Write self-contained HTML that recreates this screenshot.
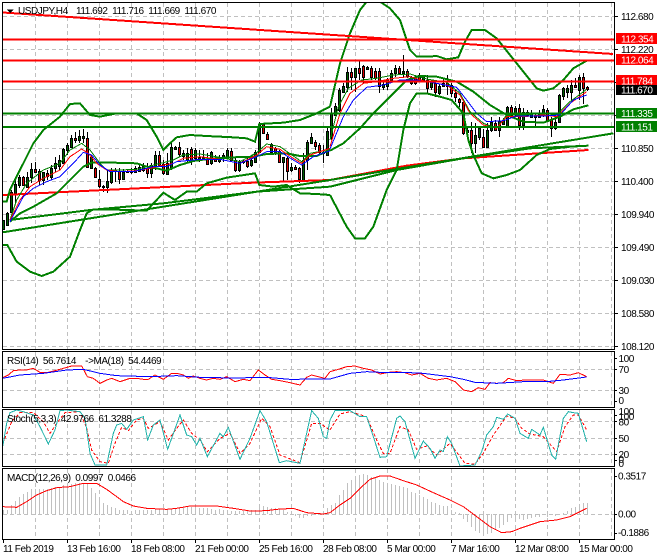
<!DOCTYPE html>
<html><head><meta charset="utf-8"><style>
html,body{margin:0;padding:0;background:#fff}
svg{display:block;font-family:"Liberation Sans",sans-serif;font-size:10px;letter-spacing:-.45px}
text{fill:#000}
text.h{word-spacing:2.3px}
.w{fill:#fff}
.g{stroke:#c0c0c0;stroke-width:1;stroke-dasharray:4 3;fill:none}
.f{fill:none;stroke:#000;stroke-width:1}
.bb{fill:none;stroke:#008000;stroke-width:6}
.ln{fill:none;stroke-width:2}
</style></head><body>
<svg width="660" height="560" viewBox="0 0 660 560" shape-rendering="crispEdges" xmlns="http://www.w3.org/2000/svg">
<defs>
<clipPath id="cm"><rect x="3" y="3" width="611" height="346"/></clipPath>
<clipPath id="cs"><rect x="3" y="410" width="611" height="56"/></clipPath>
</defs>
<rect width="660" height="560" fill="#fff"/>
<!-- grids -->
<path class="g" d="M3 16.5H614M3 49.5H614M3 115.5H614M3 148.5H614M3 181.5H614M3 214.5H614M3 247.5H614M3 280.5H614M3 313.5H614M3 346.5H614
M3 369.5H614M3 390.5H614M3 421.5H614M3 438.5H614M3 454.5H614M3 514.5H614"/>
<path class="g" d="M35.5 3V349M67.5 3V349M99.5 3V349M131.5 3V349M163.5 3V349M195.5 3V349M227.5 3V349M259.5 3V349M291.5 3V349M323.5 3V349M355.5 3V349M387.5 3V349M419.5 3V349M451.5 3V349M483.5 3V349M515.5 3V349M547.5 3V349M579.5 3V349M611.5 3V349
M35.5 352V407M67.5 352V407M99.5 352V407M131.5 352V407M163.5 352V407M195.5 352V407M227.5 352V407M259.5 352V407M291.5 352V407M323.5 352V407M355.5 352V407M387.5 352V407M419.5 352V407M451.5 352V407M483.5 352V407M515.5 352V407M547.5 352V407M579.5 352V407M611.5 352V407
M35.5 410V466M67.5 410V466M99.5 410V466M131.5 410V466M163.5 410V466M195.5 410V466M227.5 410V466M259.5 410V466M291.5 410V466M323.5 410V466M355.5 410V466M387.5 410V466M419.5 410V466M451.5 410V466M483.5 410V466M515.5 410V466M547.5 410V466M579.5 410V466M611.5 410V466
M35.5 469V539M67.5 469V539M99.5 469V539M131.5 469V539M163.5 469V539M195.5 469V539M227.5 469V539M259.5 469V539M291.5 469V539M323.5 469V539M355.5 469V539M387.5 469V539M419.5 469V539M451.5 469V539M483.5 469V539M515.5 469V539M547.5 469V539M579.5 469V539M611.5 469V539"/>
<path d="M3 89.5H614" stroke="#c0c0c0" fill="none"/>

<g clip-path="url(#cm)">
<!-- wicks -->
<path fill="none" stroke="#000" d="M3.5 220V230M7.5 212V226M11.5 190V213M15.5 180V204M19.5 175V188M23.5 176V185M27.5 172V188M31.5 163V183M35.5 162V173M39.5 169V185M43.5 172V185M47.5 170V180M51.5 165V180M55.5 157V172M59.5 155V170M63.5 148V164M67.5 143V155M71.5 135V148M75.5 132V143M79.5 130V143M83.5 129V143M87.5 132V168M91.5 155V169M95.5 167V178M99.5 170V188M103.5 185V192M107.5 170V193M111.5 168V184M115.5 168V182M119.5 168V184M123.5 169V180M127.5 170V173M131.5 168V174M135.5 166V173M139.5 165V172M143.5 163V172M147.5 163V178M151.5 163V178M155.5 151V170M159.5 151V167M163.5 160V175M167.5 153V175M171.5 142V170M175.5 146V150M179.5 142V157M183.5 150V160M187.5 148V162M191.5 147V165M195.5 148V160M199.5 150V162M203.5 150V160M207.5 153V165M211.5 151V165M215.5 155V162M219.5 155V163M223.5 153V162M227.5 148V159M231.5 148V162M235.5 158V172M239.5 160V172M243.5 160V164M247.5 158V168M251.5 158V167M255.5 150V163M259.5 122V153M263.5 123V134M267.5 132V140M271.5 143V153M275.5 147V155M279.5 150V163M283.5 157V182M287.5 157V180M291.5 163V172M295.5 165V170M299.5 167V183M303.5 153V182M307.5 140V170M311.5 133V144M315.5 140V150M319.5 143V155M323.5 145V163M327.5 128V156M331.5 108V140M335.5 103V116M339.5 88V112M343.5 83V93M347.5 67V92M351.5 68V90M355.5 68V92M359.5 60V80M363.5 65V83M367.5 66V70M371.5 66V80M375.5 68V80M379.5 68V93M383.5 82V90M387.5 78V90M391.5 70V83M395.5 65V77M399.5 66V74M403.5 55V77M407.5 69V78M411.5 76V85M415.5 75V85M419.5 73V82M423.5 75V80M427.5 75V93M431.5 80V90M435.5 82V97M439.5 84V95M443.5 78V87M447.5 75V95M451.5 83V97M455.5 89V102M459.5 98V107M463.5 102V135M467.5 128V136M471.5 122V153M475.5 123V153M479.5 126V140M483.5 129V148M487.5 123V148M491.5 117V132M495.5 120V131M499.5 117V137M503.5 118V125M507.5 106V128M511.5 105V117M515.5 106V117M519.5 104V130M523.5 108V130M527.5 110V116M531.5 110V118M535.5 113V128M539.5 110V118M543.5 105V117M547.5 108V122M551.5 117V137M555.5 117V130M559.5 94V123M563.5 87V100M567.5 85V98M571.5 80V100M575.5 78V88M579.5 75V100M583.5 73V104M587.5 86V91"/>
<!-- bull bodies -->
<path fill="#006000" stroke="#000" d="M2.5 220.5h2v9h-2zM6.5 213.5h2v12h-2zM10.5 192.5h2v20h-2zM14.5 184.5h2v9h-2zM18.5 177.5h2v8h-2zM26.5 177.5h2v10h-2zM30.5 169.5h2v8h-2zM42.5 172.5h2v8h-2zM50.5 168.5h2v9h-2zM54.5 163.5h2v5h-2zM58.5 160.5h2v6h-2zM62.5 149.5h2v14h-2zM66.5 145.5h2v5h-2zM70.5 138.5h2v9h-2zM78.5 136.5h2v4h-2zM82.5 136.5h2v2h-2zM90.5 157.5h2v11h-2zM102.5 186.5h2v1h-2zM106.5 181.5h2v6h-2zM110.5 170.5h2v12h-2zM114.5 170.5h2v1h-2zM122.5 172.5h2v7h-2zM126.5 171.5h2v1h-2zM130.5 171.5h2v1h-2zM134.5 168.5h2v4h-2zM138.5 167.5h2v4h-2zM142.5 166.5h2v4h-2zM150.5 165.5h2v8h-2zM154.5 155.5h2v11h-2zM166.5 163.5h2v11h-2zM170.5 147.5h2v21h-2zM174.5 147.5h2v2h-2zM182.5 153.5h2v3h-2zM186.5 153.5h2v7h-2zM194.5 150.5h2v8h-2zM198.5 157.5h2v2h-2zM202.5 157.5h2v1h-2zM210.5 152.5h2v11h-2zM218.5 158.5h2v3h-2zM222.5 155.5h2v2h-2zM226.5 150.5h2v7h-2zM238.5 162.5h2v8h-2zM242.5 161.5h2v1h-2zM250.5 160.5h2v5h-2zM254.5 152.5h2v10h-2zM258.5 124.5h2v28h-2zM270.5 144.5h2v8h-2zM282.5 157.5h2v5h-2zM290.5 167.5h2v3h-2zM302.5 160.5h2v20h-2zM306.5 142.5h2v18h-2zM310.5 137.5h2v6h-2zM322.5 152.5h2v1h-2zM326.5 131.5h2v24h-2zM330.5 113.5h2v24h-2zM334.5 106.5h2v9h-2zM338.5 90.5h2v20h-2zM342.5 86.5h2v6h-2zM346.5 72.5h2v15h-2zM354.5 68.5h2v9h-2zM366.5 67.5h2v2h-2zM382.5 84.5h2v3h-2zM386.5 79.5h2v7h-2zM390.5 73.5h2v7h-2zM394.5 68.5h2v5h-2zM402.5 71.5h2v2h-2zM410.5 77.5h2v6h-2zM422.5 75.5h2v5h-2zM430.5 82.5h2v5h-2zM438.5 86.5h2v7h-2zM442.5 83.5h2v3h-2zM466.5 130.5h2v2h-2zM474.5 135.5h2v8h-2zM478.5 128.5h2v9h-2zM486.5 130.5h2v17h-2zM490.5 122.5h2v8h-2zM498.5 121.5h2v9h-2zM502.5 120.5h2v4h-2zM506.5 107.5h2v20h-2zM514.5 108.5h2v5h-2zM522.5 112.5h2v13h-2zM526.5 112.5h2v3h-2zM530.5 113.5h2v4h-2zM534.5 115.5h2v2h-2zM538.5 113.5h2v4h-2zM542.5 109.5h2v6h-2zM554.5 122.5h2v6h-2zM558.5 95.5h2v27h-2zM562.5 88.5h2v8h-2zM566.5 88.5h2v4h-2zM570.5 85.5h2v7h-2zM578.5 77.5h2v13h-2z"/>
<!-- bear bodies -->
<path fill="#e00000" stroke="#000" d="M22.5 177.5h2v8h-2zM34.5 169.5h2v3h-2zM38.5 171.5h2v9h-2zM46.5 173.5h2v3h-2zM74.5 138.5h2v2h-2zM86.5 138.5h2v29h-2zM94.5 168.5h2v9h-2zM98.5 179.5h2v7h-2zM118.5 171.5h2v8h-2zM146.5 168.5h2v5h-2zM158.5 155.5h2v10h-2zM162.5 164.5h2v9h-2zM178.5 147.5h2v7h-2zM190.5 149.5h2v11h-2zM206.5 159.5h2v5h-2zM214.5 159.5h2v2h-2zM230.5 151.5h2v9h-2zM234.5 160.5h2v10h-2zM246.5 161.5h2v5h-2zM262.5 124.5h2v9h-2zM266.5 134.5h2v5h-2zM274.5 148.5h2v4h-2zM278.5 151.5h2v11h-2zM286.5 158.5h2v13h-2zM294.5 167.5h2v2h-2zM298.5 168.5h2v11h-2zM314.5 142.5h2v4h-2zM318.5 145.5h2v7h-2zM350.5 72.5h2v5h-2zM358.5 68.5h2v5h-2zM362.5 66.5h2v11h-2zM370.5 68.5h2v9h-2zM374.5 71.5h2v7h-2zM378.5 71.5h2v15h-2zM398.5 68.5h2v5h-2zM406.5 71.5h2v5h-2zM414.5 77.5h2v6h-2zM418.5 75.5h2v5h-2zM426.5 80.5h2v8h-2zM434.5 83.5h2v9h-2zM446.5 83.5h2v3h-2zM450.5 85.5h2v8h-2zM454.5 93.5h2v4h-2zM458.5 99.5h2v3h-2zM462.5 102.5h2v31h-2zM470.5 130.5h2v13h-2zM482.5 137.5h2v10h-2zM494.5 123.5h2v7h-2zM510.5 107.5h2v8h-2zM518.5 108.5h2v17h-2zM546.5 110.5h2v10h-2zM550.5 119.5h2v9h-2zM574.5 85.5h2v2h-2zM582.5 77.5h2v11h-2zM586.5 87.5h2v2h-2z"/>

<!-- left half curves (3x coords) -->
<g transform="scale(.33333)">
<polyline class="bb" points="8,585 760,548 990,540" style="stroke:#f00"/>
<polyline class="bb" points="8,605 20,605 30,570 50,530 70,490 100,430 130,390 180,350 210,312 240,310 270,345 300,350 350,340 410,340 440,360 470,410 490,450 510,430 530,412 570,405 620,408 700,412 740,415 765,425 778,372 850,368 900,360 950,340 990,320"/>
<polyline class="bb" points="8,735 22,735 50,785 90,815 125,828 160,815 210,770 240,690 260,640 280,628 320,628 440,632 470,600 490,578 525,600 560,575 590,575 620,550 680,533 765,520 778,555 820,560 860,555 900,580 950,582 990,585"/>
<polyline class="bb" points="30,665 60,640 100,620 170,580 210,540 250,500 275,488 340,488 410,490 440,500 470,505 500,512 540,495 580,483 640,475 700,472 760,470 800,462 860,460 900,468 950,468 990,450"/>
<polyline class="bb" points="30,660 270,630 490,610 770,575 990,560"/>
<polyline class="bb" points="8,697 990,540"/>
<g fill="none" stroke-width="3">
<polyline stroke="#008000" points="30,660 50,600 80,550 130,510 180,490 210,450 245,430 270,450 300,490 320,510 360,510 410,508 450,498 490,488 520,480 550,465 600,462 660,472 720,485 770,458 800,432 840,440 880,468 905,485 930,460 990,448"/>
<polyline stroke="#f00" points="30,660 60,600 90,560 130,535 180,510 210,470 245,447 265,460 290,490 320,510 360,515 410,512 450,505 490,495 520,490 550,475 600,470 660,478 720,490 770,465 800,440 840,448 880,475 905,490 930,465 990,445"/>
<polyline stroke="#00f" points="30,665 70,590 100,565 140,545 180,530 220,490 250,457 275,465 300,495 330,515 400,515 460,500 500,500 530,485 600,478 660,478 720,490 770,470 800,455 840,455 880,480 905,495 940,470 990,452"/>
</g>
</g>
<!-- right half curves -->
<g transform="translate(330 0) scale(.33333)">
<polyline class="bb" points="0,540 230,497 400,475 775,450" style="stroke:#f00"/>
<polyline class="bb" points="0,320 30,190 60,100 90,30 110,5 150,5 180,25 210,60 240,150 260,170 290,170 320,168 350,178 385,172 405,125 425,90 465,90 500,115 540,165 580,215 620,265 640,272 670,265 700,240 730,205 770,182"/>
<polyline class="bb" points="0,585 50,680 75,715 105,715 130,680 170,570 200,510 220,390 240,310 260,280 290,280 330,290 365,300 400,340 415,420 430,465 455,520 490,535 530,525 570,510 620,465 660,447 720,440 775,437"/>
<polyline class="bb" points="0,452 40,430 90,385 130,340 180,290 230,240 270,228 320,230 380,245 430,275 480,315 530,345 580,365 640,368 690,350 730,328 775,316"/>
<polyline class="bb" points="0,560 200,510 400,475 600,445 775,437"/>
<polyline class="bb" points="0,540 850,400"/>
<g fill="none" stroke-width="3">
<polyline stroke="#008000" points="0,420 25,320 55,265 95,240 140,235 190,225 240,222 290,237 350,247 390,280 420,335 460,370 500,385 530,345 580,345 640,340 680,345 720,305 770,268"/>
<polyline stroke="#f00" points="0,440 30,340 60,280 100,250 140,245 190,235 240,230 290,245 350,255 390,285 420,340 460,375 500,385 530,350 580,350 640,345 680,350 720,310 770,275"/>
<polyline stroke="#00f" points="0,447 40,350 70,300 110,262 160,255 210,240 260,240 320,250 380,262 410,300 440,340 470,365 520,362 560,348 640,348 690,345 730,300 770,285"/>
</g>
</g>
<!-- straight objects -->
<path class="ln" stroke="#f00" d="M3 12.5L613 54M3 39.5H614M3 60.5H614M3 81.5H614"/>
<path class="ln" stroke="#008000" d="M3 113.5H614M3 127H614"/>
</g>

<!-- macd bars -->
<path fill="none" stroke="#c0c0c0" d="M3.5 514V510M7.5 514V510M11.5 514V505M15.5 514V501M19.5 514V497M23.5 514V494M27.5 514V492M31.5 514V489M35.5 514V489M39.5 514V489M43.5 514V489M47.5 514V489M51.5 514V488M55.5 514V487M59.5 514V487M63.5 514V485M67.5 514V485M71.5 514V484M75.5 514V483M79.5 514V483M83.5 514V483M87.5 514V484M91.5 514V488M95.5 514V493M99.5 514V497M103.5 514V503M107.5 514V505M111.5 514V507M115.5 514V508M119.5 514V510M123.5 514V510M127.5 514V510M131.5 514V511M135.5 514V510M139.5 514V510M143.5 514V510M147.5 514V510M151.5 514V510M155.5 514V509M159.5 514V509M163.5 514V509M167.5 514V509M171.5 514V509M175.5 514V509M179.5 514V507M183.5 514V507M187.5 514V507M191.5 514V507M195.5 514V508M199.5 514V508M203.5 514V508M207.5 514V508M211.5 514V509M215.5 514V510M219.5 514V509M223.5 514V510M227.5 514V510M231.5 514V511M235.5 514V511M239.5 514V511M243.5 514V511M247.5 514V511M251.5 514V510M255.5 514V510M259.5 514V507M263.5 514V506M267.5 514V507M271.5 514V508M275.5 514V508M279.5 514V509M283.5 514V510M287.5 514V512M291.5 514V512M295.5 514V516M299.5 514V518M303.5 514V518M307.5 514V516M311.5 514V516M315.5 514V515M319.5 514V514M323.5 514V512M327.5 514V508M331.5 514V505M335.5 514V503M339.5 514V495M343.5 514V490M347.5 514V483M351.5 514V480M355.5 514V476M359.5 514V475M363.5 514V474M367.5 514V475M371.5 514V477M375.5 514V477M379.5 514V480M383.5 514V482M387.5 514V483M391.5 514V484M395.5 514V485M399.5 514V486M403.5 514V487M407.5 514V488M411.5 514V492M415.5 514V493M419.5 514V495M423.5 514V497M427.5 514V499M431.5 514V502M435.5 514V503M439.5 514V505M443.5 514V506M447.5 514V506M451.5 514V510M455.5 514V512M459.5 514V513M463.5 514V519M467.5 514V522M471.5 514V527M475.5 514V531M479.5 514V533M483.5 514V535M487.5 514V534M491.5 514V533M495.5 514V530M499.5 514V528M503.5 514V525M507.5 514V522M511.5 514V518M515.5 514V520M519.5 514V519M523.5 514V520M527.5 514V519M531.5 514V518M535.5 514V517M539.5 514V517M543.5 514V515M547.5 514V517M551.5 514V515M555.5 514V516M559.5 514V514M563.5 514V513M567.5 514V511M571.5 514V508M575.5 514V507M579.5 514V505M583.5 514V503M587.5 514V503"/>

<!-- RSI -->
<g transform="translate(0 340) scale(.33333)" fill="none" stroke-width="3">
<polyline stroke="#f00" points="8,113 25,105 40,92 60,90 80,90 100,85 120,97 145,97 165,92 190,85 215,78 245,78 262,110 280,115 300,130 320,120 335,115 360,125 390,115 410,115 430,118 445,118 465,105 490,118 515,100 530,100 550,105 565,115 580,108 600,115 620,120 640,115 660,118 680,110 705,125 730,118 750,122 775,90 795,105 815,118 840,122 870,128 900,135 920,112 935,105 955,110 975,115 990,95"/>
<polyline stroke="#00f" stroke-width="3" points="8,115 60,105 130,100 200,90 250,88 300,100 350,107 450,110 530,107 600,112 700,114 800,112 870,118 990,117"/>
<g transform="translate(990 0)">
<polyline stroke="#f00" points="0,95 25,88 50,80 75,78 100,85 125,90 150,102 175,97 200,95 225,98 245,105 270,100 295,115 320,120 350,115 375,125 400,150 425,155 445,143 465,148 480,128 500,130 520,128 535,115 560,122 585,120 640,120 670,130 690,103 720,105 745,98 770,110"/>
<polyline stroke="#00f" stroke-width="3" points="0,117 60,100 110,95 170,98 220,97 280,100 360,110 400,118 435,127 500,130 580,125 660,124 700,120 770,111"/>
</g>
</g>

<!-- Stoch -->
<g clip-path="url(#cs)">
<g transform="translate(0 340) scale(.33333)" fill="none" stroke-width="3">
<polyline stroke="#f00" stroke-dasharray="9 6" points="8,310 25,270 35,245 60,218 100,218 130,245 150,280 170,250 195,218 240,215 260,265 275,330 300,365 325,370 345,310 365,262 385,272 410,240 430,235 445,265 480,245 505,300 530,265 550,240 575,280 600,300 622,335 660,295 690,280 720,340 750,310 785,235 810,260 840,345 900,368 935,250 960,250 990,270"/>
<polyline stroke="#20b2aa" points="8,320 20,250 30,218 50,210 70,215 100,225 120,260 145,312 165,270 180,212 200,210 240,215 255,235 270,340 285,375 320,375 340,280 350,255 365,250 380,268 400,240 430,230 443,300 460,255 480,240 503,328 540,225 560,285 575,290 590,315 600,295 622,350 660,280 670,290 685,262 720,358 750,295 780,212 800,245 838,368 860,362 900,370 935,212 955,235 970,290 980,295 990,240"/>
<g transform="translate(990 0)">
<polyline stroke="#f00" stroke-dasharray="9 6" points="0,270 30,222 60,215 110,230 140,300 160,340 180,340 210,260 235,270 260,328 290,318 320,345 360,310 405,370 435,372 460,340 490,285 530,228 555,235 575,265 600,282 640,290 680,335 705,260 730,225 745,225 770,270"/>
<polyline stroke="#20b2aa" points="0,240 15,212 60,212 90,230 110,230 130,290 150,352 170,350 200,235 210,228 225,245 255,355 280,303 300,325 315,355 330,330 340,335 352,290 365,310 390,378 435,375 455,335 470,285 490,260 500,232 520,238 533,222 555,235 570,280 595,295 605,268 630,285 640,262 665,345 677,358 700,235 715,215 730,218 745,220 770,305"/>
</g>
</g>
</g>

<!-- MACD line -->
<g transform="translate(0 340) scale(.33333)" fill="none" stroke="#f00" stroke-width="3">
<polyline points="8,500 50,502 80,485 110,465 140,452 170,443 210,440 250,430 290,430 320,448 350,470 370,485 400,498 440,505 500,508 530,505 570,498 650,498 700,505 750,513 800,512 830,508 880,505 920,518 970,522 990,518"/>
<polyline transform="translate(990 0)" points="0,518 30,495 60,475 90,445 120,418 150,408 180,408 220,422 260,435 310,458 360,480 400,500 440,530 480,560 515,578 545,575 570,565 630,545 680,540 720,530 770,505"/>
</g>

<!-- frames -->
<path class="f" d="M2.5 2.5H614.5V349.5H2.5ZM2.5 351.5H614.5V407.5H2.5ZM2.5 409.5H614.5V466.5H2.5ZM2.5 468.5H614.5V539.5H2.5Z"/>
<!-- ticks -->
<path class="f" d="M614 16.5h4M614 49.5h4M614 82.5h4M614 115.5h4M614 148.5h4M614 181.5h4M614 214.5h4M614 247.5h4M614 280.5h4M614 313.5h4M614 346.5h4M614 358.5h3M614 369.5h3M614 390.5h3M614 401.5h3M614 415.5h3M614 421.5h3M614 438.5h3M614 454.5h3M614 460.5h3M614 476.5h3M614 514.5h3M614 533.5h3M3.5 539v4M67.5 539v4M131.5 539v4M195.5 539v4M259.5 539v4M323.5 539v4M387.5 539v4M451.5 539v4M515.5 539v4M579.5 539v4"/>

<!-- title -->
<path d="M7 9.5h6.500l-3.250 3.500z" fill="#000"/>
<text x="18" y="14">USDJPY,H4</text><text class="h" x="76" y="14">111.692 111.716 111.669 111.670</text>
<text class="h" x="7" y="364">RSI(14) 56.7614&#160; -&gt;MA(18) 54.4469</text>
<text class="h" x="7" y="422">Stoch(5,3,3) 42.9766 61.3288</text>
<text class="h" x="7" y="481">MACD(12,26,9) 0.0997 0.0466</text>

<!-- price labels -->
<text x="621" y="20">112.680</text>
<text x="621" y="53">112.220</text>
<text x="621" y="152">110.850</text>
<text x="621" y="185">110.400</text>
<text x="621" y="218">109.940</text>
<text x="621" y="251">109.490</text>
<text x="621" y="284">109.030</text>
<text x="621" y="317">108.580</text>
<text x="621" y="350">108.120</text>
<rect x="616" y="33" width="41" height="11" fill="#f00"/><text class="w" x="621" y="42.500">112.354</text>
<rect x="616" y="54" width="41" height="11" fill="#f00"/><text class="w" x="621" y="63.500">112.064</text>
<rect x="616" y="75" width="41" height="11" fill="#f00"/><text class="w" x="621" y="84.500">111.784</text>
<rect x="616" y="85" width="41" height="10" fill="#000"/><text class="w" x="621" y="93.500">111.670</text>
<rect x="616" y="108" width="41" height="10.500" fill="#008000"/><text class="w" x="621" y="117">111.335</text>
<rect x="616" y="121" width="41" height="11" fill="#008000"/><text class="w" x="621" y="130.500">111.151</text>

<text x="618.500" y="362">100</text><text x="618.500" y="373">70</text><text x="618.500" y="394">30</text><text x="618.500" y="404">0</text>
<text x="618.500" y="415">100</text><text x="618.500" y="420">100</text><text x="618.500" y="425.500">80</text><text x="618.500" y="442">50</text><text x="618.500" y="458">20</text><text x="618.500" y="463">0</text><text x="618.500" y="467">0</text>
<text x="618" y="479.500">0.3517</text><text x="618" y="517.500">0.00</text><text x="618" y="536">-0.1886</text>

<!-- time labels -->
<text x="3" y="552">11 Feb 2019</text>
<text x="67" y="552">13 Feb 16:00</text>
<text x="131" y="552">18 Feb 08:00</text>
<text x="195" y="552">21 Feb 00:00</text>
<text x="259" y="552">25 Feb 16:00</text>
<text x="323" y="552">28 Feb 08:00</text>
<text x="387" y="552">5 Mar 00:00</text>
<text x="451" y="552">7 Mar 16:00</text>
<text x="515" y="552">12 Mar 08:00</text>
<text x="579" y="552">15 Mar 00:00</text>
</svg>
</body></html>
